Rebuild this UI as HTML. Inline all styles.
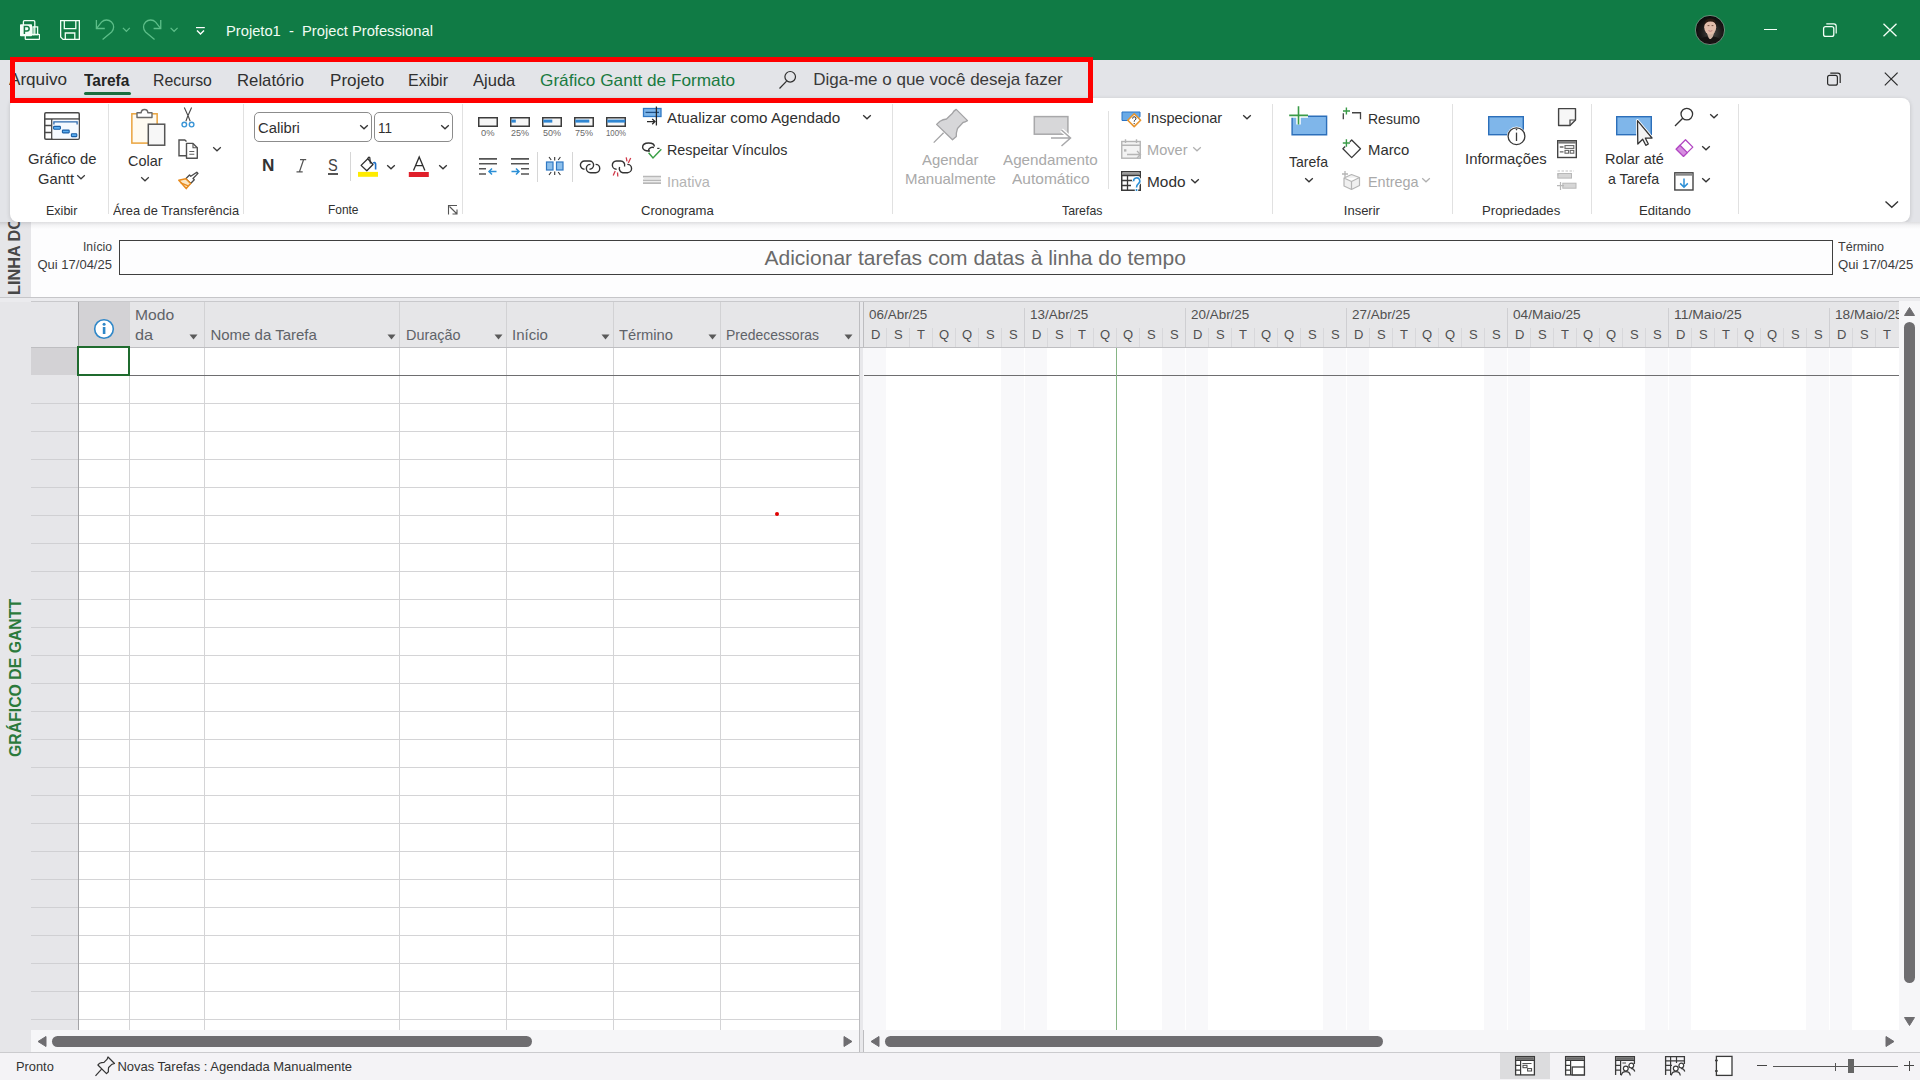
<!DOCTYPE html>
<html><head><meta charset="utf-8"><title>Projeto1 - Project Professional</title>
<style>html,body{margin:0;padding:0}
body{width:1920px;height:1080px;overflow:hidden;position:relative;background:#E3E4E8;font-family:"Liberation Sans",sans-serif}
body>div,body>svg{position:absolute}
.t{position:absolute;white-space:pre;line-height:1;transform-origin:0 0}
</style></head>
<body>
<div style="left:0px;top:0px;width:1920px;height:60px;background:#107B45;"></div>
<div style="left:0px;top:60px;width:1920px;height:38px;background:#E3E4E8;"></div>
<div style="left:10px;top:98px;width:1900px;height:124px;background:#fff;border-radius:8px;box-shadow:0 1px 4px rgba(0,0,0,0.16)"></div>
<div style="left:0px;top:222px;width:31px;height:830px;background:#E6E6E9;"></div>
<div style="left:31px;top:222px;width:1889px;height:75px;background:#FDFDFE;"></div>
<div style="left:0;top:222px;width:1920px;height:7px;background:linear-gradient(rgba(60,60,70,0.16),rgba(60,60,70,0.05) 45%,rgba(60,60,70,0))"></div>
<div style="left:0px;top:297px;width:1920px;height:5px;background:#EBEBEE;"></div>
<div style="left:0px;top:297px;width:1920px;height:1px;background:#C6C6C9;"></div>
<div style="left:31px;top:301px;width:1889px;height:1px;background:#C9C9CC;"></div>
<div style="left:31px;top:302px;width:47px;height:45px;background:#E6E6E9;"></div>
<div style="left:78px;top:302px;width:51px;height:45px;background:#D3D2D5;"></div>
<div style="left:129px;top:302px;width:730px;height:45px;background:#E6E6E8;"></div>
<div style="left:31px;top:347px;width:47px;height:683px;background:#E6E6E9;"></div>
<div style="left:31px;top:347px;width:47px;height:28px;background:#D3D2D5;"></div>
<div style="left:78px;top:347px;width:781px;height:683px;background:#FFFFFF;"></div>
<div style="left:859px;top:302px;width:5px;height:728px;background:#E8E8EB;"></div>
<div style="left:859px;top:302px;width:1px;height:728px;background:#BDBDC0;"></div>
<div style="left:863px;top:302px;width:1px;height:728px;background:#BDBDC0;"></div>
<div style="left:864px;top:302px;width:1035px;height:45px;background:#E6E6E8;"></div>
<div style="left:864px;top:347px;width:1035px;height:683px;background:#FFFFFF;"></div>
<div style="left:1899px;top:301px;width:21px;height:729px;background:#F6F6F8;"></div>
<div style="left:31px;top:1030px;width:828px;height:22px;background:#F6F6F8;"></div>
<div style="left:864px;top:1030px;width:1056px;height:22px;background:#F6F6F8;"></div>
<div style="left:859px;top:1030px;width:5px;height:22px;background:#E8E8EB;"></div>
<div style="left:859px;top:1030px;width:1px;height:22px;background:#BDBDC0;"></div>
<div style="left:863px;top:1030px;width:1px;height:22px;background:#BDBDC0;"></div>
<div style="left:0px;top:1052px;width:1920px;height:28px;background:#F4F3F6;"></div>
<div style="left:0px;top:1052px;width:1920px;height:1px;background:#CBCBCE;"></div>
<div style="left:129px;top:302px;width:1px;height:45px;background:#D2D2D4;"></div>
<div style="left:129px;top:347px;width:1px;height:683px;background:#D4D4D6;"></div>
<div style="left:204px;top:302px;width:1px;height:45px;background:#D2D2D4;"></div>
<div style="left:204px;top:347px;width:1px;height:683px;background:#D4D4D6;"></div>
<div style="left:399px;top:302px;width:1px;height:45px;background:#D2D2D4;"></div>
<div style="left:399px;top:347px;width:1px;height:683px;background:#D4D4D6;"></div>
<div style="left:506px;top:302px;width:1px;height:45px;background:#D2D2D4;"></div>
<div style="left:506px;top:347px;width:1px;height:683px;background:#D4D4D6;"></div>
<div style="left:613px;top:302px;width:1px;height:45px;background:#D2D2D4;"></div>
<div style="left:613px;top:347px;width:1px;height:683px;background:#D4D4D6;"></div>
<div style="left:720px;top:302px;width:1px;height:45px;background:#D2D2D4;"></div>
<div style="left:720px;top:347px;width:1px;height:683px;background:#D4D4D6;"></div>
<div style="left:78px;top:302px;width:1px;height:728px;background:#A3A3A6;"></div>
<div style="left:31px;top:347px;width:868px;height:1px;background:#BEBEC1;"></div>
<div style="left:864px;top:347px;width:1035px;height:1px;background:#BEBEC1;"></div>
<div style="left:78px;top:375px;width:781px;height:1px;background:#6E6E70;"></div>
<div style="left:31px;top:403px;width:47px;height:1px;background:#D0D0D3;"></div>
<div style="left:79px;top:403px;width:780px;height:1px;background:#D4D4D6;"></div>
<div style="left:31px;top:431px;width:47px;height:1px;background:#D0D0D3;"></div>
<div style="left:79px;top:431px;width:780px;height:1px;background:#D4D4D6;"></div>
<div style="left:31px;top:459px;width:47px;height:1px;background:#D0D0D3;"></div>
<div style="left:79px;top:459px;width:780px;height:1px;background:#D4D4D6;"></div>
<div style="left:31px;top:487px;width:47px;height:1px;background:#D0D0D3;"></div>
<div style="left:79px;top:487px;width:780px;height:1px;background:#D4D4D6;"></div>
<div style="left:31px;top:515px;width:47px;height:1px;background:#D0D0D3;"></div>
<div style="left:79px;top:515px;width:780px;height:1px;background:#D4D4D6;"></div>
<div style="left:31px;top:543px;width:47px;height:1px;background:#D0D0D3;"></div>
<div style="left:79px;top:543px;width:780px;height:1px;background:#D4D4D6;"></div>
<div style="left:31px;top:571px;width:47px;height:1px;background:#D0D0D3;"></div>
<div style="left:79px;top:571px;width:780px;height:1px;background:#D4D4D6;"></div>
<div style="left:31px;top:599px;width:47px;height:1px;background:#D0D0D3;"></div>
<div style="left:79px;top:599px;width:780px;height:1px;background:#D4D4D6;"></div>
<div style="left:31px;top:627px;width:47px;height:1px;background:#D0D0D3;"></div>
<div style="left:79px;top:627px;width:780px;height:1px;background:#D4D4D6;"></div>
<div style="left:31px;top:655px;width:47px;height:1px;background:#D0D0D3;"></div>
<div style="left:79px;top:655px;width:780px;height:1px;background:#D4D4D6;"></div>
<div style="left:31px;top:683px;width:47px;height:1px;background:#D0D0D3;"></div>
<div style="left:79px;top:683px;width:780px;height:1px;background:#D4D4D6;"></div>
<div style="left:31px;top:711px;width:47px;height:1px;background:#D0D0D3;"></div>
<div style="left:79px;top:711px;width:780px;height:1px;background:#D4D4D6;"></div>
<div style="left:31px;top:739px;width:47px;height:1px;background:#D0D0D3;"></div>
<div style="left:79px;top:739px;width:780px;height:1px;background:#D4D4D6;"></div>
<div style="left:31px;top:767px;width:47px;height:1px;background:#D0D0D3;"></div>
<div style="left:79px;top:767px;width:780px;height:1px;background:#D4D4D6;"></div>
<div style="left:31px;top:795px;width:47px;height:1px;background:#D0D0D3;"></div>
<div style="left:79px;top:795px;width:780px;height:1px;background:#D4D4D6;"></div>
<div style="left:31px;top:823px;width:47px;height:1px;background:#D0D0D3;"></div>
<div style="left:79px;top:823px;width:780px;height:1px;background:#D4D4D6;"></div>
<div style="left:31px;top:851px;width:47px;height:1px;background:#D0D0D3;"></div>
<div style="left:79px;top:851px;width:780px;height:1px;background:#D4D4D6;"></div>
<div style="left:31px;top:879px;width:47px;height:1px;background:#D0D0D3;"></div>
<div style="left:79px;top:879px;width:780px;height:1px;background:#D4D4D6;"></div>
<div style="left:31px;top:907px;width:47px;height:1px;background:#D0D0D3;"></div>
<div style="left:79px;top:907px;width:780px;height:1px;background:#D4D4D6;"></div>
<div style="left:31px;top:935px;width:47px;height:1px;background:#D0D0D3;"></div>
<div style="left:79px;top:935px;width:780px;height:1px;background:#D4D4D6;"></div>
<div style="left:31px;top:963px;width:47px;height:1px;background:#D0D0D3;"></div>
<div style="left:79px;top:963px;width:780px;height:1px;background:#D4D4D6;"></div>
<div style="left:31px;top:991px;width:47px;height:1px;background:#D0D0D3;"></div>
<div style="left:79px;top:991px;width:780px;height:1px;background:#D4D4D6;"></div>
<div style="left:31px;top:1019px;width:47px;height:1px;background:#D0D0D3;"></div>
<div style="left:79px;top:1019px;width:780px;height:1px;background:#D4D4D6;"></div>
<div style="left:77px;top:346px;width:49px;height:26px;border:2px solid #1F6B2E"></div>
<div style="left:863px;top:348px;width:23px;height:682px;background:#F8F8FA;"></div>
<div style="left:1001px;top:348px;width:23px;height:682px;background:#F8F8FA;"></div>
<div style="left:1024px;top:348px;width:23px;height:682px;background:#F8F8FA;"></div>
<div style="left:1162px;top:348px;width:23px;height:682px;background:#F8F8FA;"></div>
<div style="left:1185px;top:348px;width:23px;height:682px;background:#F8F8FA;"></div>
<div style="left:1323px;top:348px;width:23px;height:682px;background:#F8F8FA;"></div>
<div style="left:1346px;top:348px;width:23px;height:682px;background:#F8F8FA;"></div>
<div style="left:1484px;top:348px;width:23px;height:682px;background:#F8F8FA;"></div>
<div style="left:1507px;top:348px;width:23px;height:682px;background:#F8F8FA;"></div>
<div style="left:1645px;top:348px;width:23px;height:682px;background:#F8F8FA;"></div>
<div style="left:1668px;top:348px;width:23px;height:682px;background:#F8F8FA;"></div>
<div style="left:1806px;top:348px;width:23px;height:682px;background:#F8F8FA;"></div>
<div style="left:1829px;top:348px;width:23px;height:682px;background:#F8F8FA;"></div>
<div style="left:1024px;top:348px;width:1px;height:682px;background:#FFFFFF;"></div>
<div style="left:1185px;top:348px;width:1px;height:682px;background:#FFFFFF;"></div>
<div style="left:1346px;top:348px;width:1px;height:682px;background:#FFFFFF;"></div>
<div style="left:1507px;top:348px;width:1px;height:682px;background:#FFFFFF;"></div>
<div style="left:1668px;top:348px;width:1px;height:682px;background:#FFFFFF;"></div>
<div style="left:1829px;top:348px;width:1px;height:682px;background:#FFFFFF;"></div>
<div style="left:864px;top:375px;width:1035px;height:1px;background:#6E6E70;"></div>
<div style="left:1116px;top:348px;width:1px;height:682px;background:#86B585;"></div>
<div class="t" style="left:225.50px;top:23.25px;font-size:15px;color:#F2FBF4;transform:scaleX(0.9809);">Projeto1  -  Project Professional</div>
<div class="t" style="left:9.00px;top:71.35px;font-size:17px;color:#303030;transform:scaleX(1.0062);">Arquivo</div>
<div class="t" style="left:84.40px;top:71.55px;font-size:17px;color:#242424;font-weight:700;transform:scaleX(0.9103);">Tarefa</div>
<div class="t" style="left:153.40px;top:71.55px;font-size:17px;color:#303030;transform:scaleX(0.9305);">Recurso</div>
<div class="t" style="left:237.40px;top:71.55px;font-size:17px;color:#303030;transform:scaleX(0.9848);">Relatório</div>
<div class="t" style="left:329.50px;top:71.55px;font-size:17px;color:#303030;transform:scaleX(1.0072);">Projeto</div>
<div class="t" style="left:407.50px;top:71.55px;font-size:17px;color:#303030;transform:scaleX(0.9410);">Exibir</div>
<div class="t" style="left:472.70px;top:71.55px;font-size:17px;color:#303030;transform:scaleX(0.9729);">Ajuda</div>
<div class="t" style="left:540.00px;top:71.55px;font-size:17px;color:#1A7A40;transform:scaleX(1.0117);">Gráfico Gantt de Formato</div>
<div class="t" style="left:813.30px;top:70.85px;font-size:17px;color:#3A3A3A;">Diga-me o que você deseja fazer</div>
<div class="t" style="left:27.50px;top:151.00px;font-size:15px;color:#303030;transform:scaleX(0.9899);">Gráfico de</div>
<div class="t" style="left:37.50px;top:170.75px;font-size:15px;color:#303030;transform:scaleX(0.9813);">Gantt</div>
<div class="t" style="left:45.60px;top:203.70px;font-size:13px;color:#303030;transform:scaleX(0.9629);">Exibir</div>
<div class="t" style="left:127.50px;top:152.85px;font-size:15px;color:#303030;transform:scaleX(0.9625);">Colar</div>
<div class="t" style="left:112.50px;top:203.70px;font-size:13px;color:#303030;transform:scaleX(0.9852);">Área de Transferência</div>
<div class="t" style="left:327.50px;top:203.45px;font-size:13px;color:#303030;transform:scaleX(0.9175);">Fonte</div>
<div class="t" style="left:667.40px;top:110.25px;font-size:15px;color:#303030;transform:scaleX(1.0135);">Atualizar como Agendado</div>
<div class="t" style="left:667.40px;top:142.05px;font-size:15px;color:#303030;transform:scaleX(0.9556);">Respeitar Vínculos</div>
<div class="t" style="left:667.40px;top:173.95px;font-size:15px;color:#B4B4B4;transform:scaleX(0.9684);">Inativa</div>
<div class="t" style="left:640.70px;top:203.75px;font-size:13px;color:#303030;transform:scaleX(1.0075);">Cronograma</div>
<div class="t" style="left:922.00px;top:151.85px;font-size:15px;color:#A9A9A9;transform:scaleX(0.9945);">Agendar</div>
<div class="t" style="left:905.00px;top:171.45px;font-size:15px;color:#A9A9A9;">Manualmente</div>
<div class="t" style="left:1003.00px;top:151.85px;font-size:15px;color:#A9A9A9;transform:scaleX(1.0139);">Agendamento</div>
<div class="t" style="left:1012.00px;top:171.45px;font-size:15px;color:#A9A9A9;transform:scaleX(1.0342);">Automático</div>
<div class="t" style="left:1146.50px;top:110.25px;font-size:15px;color:#303030;transform:scaleX(0.9697);">Inspecionar</div>
<div class="t" style="left:1146.50px;top:142.25px;font-size:15px;color:#A9A9A9;transform:scaleX(0.9718);">Mover</div>
<div class="t" style="left:1146.50px;top:174.25px;font-size:15px;color:#303030;transform:scaleX(1.0261);">Modo</div>
<div class="t" style="left:1061.60px;top:203.85px;font-size:13px;color:#303030;transform:scaleX(0.9477);">Tarefas</div>
<div class="t" style="left:1289.00px;top:154.05px;font-size:15px;color:#303030;transform:scaleX(0.9355);">Tarefa</div>
<div class="t" style="left:1367.50px;top:111.05px;font-size:15px;color:#303030;transform:scaleX(0.9328);">Resumo</div>
<div class="t" style="left:1367.50px;top:142.25px;font-size:15px;color:#303030;transform:scaleX(0.9910);">Marco</div>
<div class="t" style="left:1367.50px;top:174.25px;font-size:15px;color:#A9A9A9;transform:scaleX(0.9612);">Entrega</div>
<div class="t" style="left:1343.80px;top:203.95px;font-size:13px;color:#303030;">Inserir</div>
<div class="t" style="left:1465.30px;top:150.65px;font-size:15px;color:#303030;transform:scaleX(0.9899);">Informações</div>
<div class="t" style="left:1482.30px;top:203.95px;font-size:13px;color:#303030;transform:scaleX(1.0113);">Propriedades</div>
<div class="t" style="left:1604.50px;top:150.65px;font-size:15px;color:#303030;transform:scaleX(0.9677);">Rolar até</div>
<div class="t" style="left:1608.00px;top:170.95px;font-size:15px;color:#303030;transform:scaleX(0.9465);">a Tarefa</div>
<div class="t" style="left:1639.00px;top:203.95px;font-size:13px;color:#303030;transform:scaleX(1.0093);">Editando</div>
<div class="t" style="left:83.30px;top:239.75px;font-size:13px;color:#3C3C3C;transform:scaleX(0.9333);">Início</div>
<div class="t" style="left:37.50px;top:257.70px;font-size:13px;color:#3C3C3C;">Qui 17/04/25</div>
<div class="t" style="left:1838.30px;top:239.75px;font-size:13px;color:#3C3C3C;transform:scaleX(0.9648);">Término</div>
<div class="t" style="left:1838.30px;top:257.65px;font-size:13px;color:#3C3C3C;transform:scaleX(1.0101);">Qui 17/04/25</div>
<div class="t" style="left:764.50px;top:247.15px;font-size:21px;color:#6A6A6A;">Adicionar tarefas com datas à linha do tempo</div>
<div class="t" style="left:135.40px;top:307.05px;font-size:15px;color:#5F6368;transform:scaleX(1.0421);">Modo</div>
<div class="t" style="left:135.40px;top:326.85px;font-size:15px;color:#5F6368;transform:scaleX(1.0848);">da</div>
<div class="t" style="left:210.40px;top:326.85px;font-size:15px;color:#5F6368;">Nome da Tarefa</div>
<div class="t" style="left:405.50px;top:326.85px;font-size:15px;color:#5F6368;transform:scaleX(0.9613);">Duração</div>
<div class="t" style="left:512.00px;top:326.85px;font-size:15px;color:#5F6368;">Início</div>
<div class="t" style="left:619.00px;top:326.85px;font-size:15px;color:#5F6368;transform:scaleX(0.9816);">Término</div>
<div class="t" style="left:725.80px;top:326.85px;font-size:15px;color:#5F6368;transform:scaleX(0.9295);">Predecessoras</div>
<div class="t" style="left:15.50px;top:1059.65px;font-size:13px;color:#333333;transform:scaleX(0.9869);">Pronto</div>
<div class="t" style="left:117.40px;top:1060.05px;font-size:13px;color:#333333;">Novas Tarefas : Agendada Manualmente</div>
<div style="left:84px;top:92px;width:47px;height:3px;border-radius:2px;background:#1B6E3E"></div>
<div style="left:108px;top:104px;width:1px;height:110px;background:#E1E1E1;"></div>
<div style="left:243px;top:104px;width:1px;height:110px;background:#E1E1E1;"></div>
<div style="left:462px;top:104px;width:1px;height:110px;background:#E1E1E1;"></div>
<div style="left:892px;top:104px;width:1px;height:110px;background:#E1E1E1;"></div>
<div style="left:1272px;top:104px;width:1px;height:110px;background:#E1E1E1;"></div>
<div style="left:1452px;top:104px;width:1px;height:110px;background:#E1E1E1;"></div>
<div style="left:1591px;top:104px;width:1px;height:110px;background:#E1E1E1;"></div>
<div style="left:1738px;top:104px;width:1px;height:110px;background:#E1E1E1;"></div>
<div style="left:350px;top:152px;width:1px;height:29px;background:#D6D6D6;"></div>
<div style="left:537px;top:152px;width:1px;height:30px;background:#D6D6D6;"></div>
<div style="left:572px;top:152px;width:1px;height:30px;background:#D6D6D6;"></div>
<div style="left:1108px;top:111px;width:1px;height:78px;background:#E1E1E1;"></div>
<div style="left:119px;top:240px;width:1712px;height:33px;border:1px solid #3F3F3F"></div>
<div style="left:0;top:222px;width:31px;height:75px;overflow:hidden"><div class="t" style="left:7.2px;top:72.6px;font-size:16px;font-weight:700;color:#474747;transform:rotate(-90deg) scaleX(1.015);transform-origin:0 0">LINHA DO TEMPO</div></div>
<div class="t" style="left:7.05px;top:757px;font-size:17px;font-weight:700;color:#2B7A3B;transform:rotate(-90deg) scaleX(0.93);transform-origin:0 0">GRÁFICO DE GANTT</div>
<div class="t" style="left:869.00px;top:307.85px;font-size:13px;color:#505050;transform:scaleX(1.0342);">06/Abr/25</div>
<div style="left:1024px;top:308px;width:1px;height:39px;background:#CFCFD2;"></div>
<div class="t" style="left:1030.00px;top:307.85px;font-size:13px;color:#505050;transform:scaleX(1.0342);">13/Abr/25</div>
<div style="left:1185px;top:308px;width:1px;height:39px;background:#CFCFD2;"></div>
<div class="t" style="left:1191.00px;top:307.85px;font-size:13px;color:#505050;transform:scaleX(1.0342);">20/Abr/25</div>
<div style="left:1346px;top:308px;width:1px;height:39px;background:#CFCFD2;"></div>
<div class="t" style="left:1352.00px;top:307.85px;font-size:13px;color:#505050;transform:scaleX(1.0342);">27/Abr/25</div>
<div style="left:1507px;top:308px;width:1px;height:39px;background:#CFCFD2;"></div>
<div class="t" style="left:1513.00px;top:307.85px;font-size:13px;color:#505050;transform:scaleX(1.0525);">04/Maio/25</div>
<div style="left:1668px;top:308px;width:1px;height:39px;background:#CFCFD2;"></div>
<div class="t" style="left:1674.00px;top:307.85px;font-size:13px;color:#505050;transform:scaleX(1.0686);">11/Maio/25</div>
<div style="left:1829px;top:308px;width:1px;height:39px;background:#CFCFD2;"></div>
<div class="t" style="left:1835.00px;top:307.85px;font-size:13px;color:#505050;transform:scaleX(1.0525);">18/Maio/25</div>
<div class="t" style="left:871.00px;top:327.55px;font-size:13px;color:#505050;">D</div>
<div style="left:886px;top:328px;width:1px;height:19px;background:#D8D8DB;"></div>
<div class="t" style="left:894.00px;top:327.55px;font-size:13px;color:#505050;">S</div>
<div style="left:909px;top:328px;width:1px;height:19px;background:#D8D8DB;"></div>
<div class="t" style="left:917.00px;top:327.55px;font-size:13px;color:#505050;">T</div>
<div style="left:932px;top:328px;width:1px;height:19px;background:#D8D8DB;"></div>
<div class="t" style="left:939.00px;top:327.55px;font-size:13px;color:#505050;">Q</div>
<div style="left:955px;top:328px;width:1px;height:19px;background:#D8D8DB;"></div>
<div class="t" style="left:962.00px;top:327.55px;font-size:13px;color:#505050;">Q</div>
<div style="left:978px;top:328px;width:1px;height:19px;background:#D8D8DB;"></div>
<div class="t" style="left:986.00px;top:327.55px;font-size:13px;color:#505050;">S</div>
<div style="left:1001px;top:328px;width:1px;height:19px;background:#D8D8DB;"></div>
<div class="t" style="left:1009.00px;top:327.55px;font-size:13px;color:#505050;">S</div>
<div class="t" style="left:1032.00px;top:327.55px;font-size:13px;color:#505050;">D</div>
<div style="left:1047px;top:328px;width:1px;height:19px;background:#D8D8DB;"></div>
<div class="t" style="left:1055.00px;top:327.55px;font-size:13px;color:#505050;">S</div>
<div style="left:1070px;top:328px;width:1px;height:19px;background:#D8D8DB;"></div>
<div class="t" style="left:1078.00px;top:327.55px;font-size:13px;color:#505050;">T</div>
<div style="left:1093px;top:328px;width:1px;height:19px;background:#D8D8DB;"></div>
<div class="t" style="left:1100.00px;top:327.55px;font-size:13px;color:#505050;">Q</div>
<div style="left:1116px;top:328px;width:1px;height:19px;background:#D8D8DB;"></div>
<div class="t" style="left:1123.00px;top:327.55px;font-size:13px;color:#505050;">Q</div>
<div style="left:1139px;top:328px;width:1px;height:19px;background:#D8D8DB;"></div>
<div class="t" style="left:1147.00px;top:327.55px;font-size:13px;color:#505050;">S</div>
<div style="left:1162px;top:328px;width:1px;height:19px;background:#D8D8DB;"></div>
<div class="t" style="left:1170.00px;top:327.55px;font-size:13px;color:#505050;">S</div>
<div class="t" style="left:1193.00px;top:327.55px;font-size:13px;color:#505050;">D</div>
<div style="left:1208px;top:328px;width:1px;height:19px;background:#D8D8DB;"></div>
<div class="t" style="left:1216.00px;top:327.55px;font-size:13px;color:#505050;">S</div>
<div style="left:1231px;top:328px;width:1px;height:19px;background:#D8D8DB;"></div>
<div class="t" style="left:1239.00px;top:327.55px;font-size:13px;color:#505050;">T</div>
<div style="left:1254px;top:328px;width:1px;height:19px;background:#D8D8DB;"></div>
<div class="t" style="left:1261.00px;top:327.55px;font-size:13px;color:#505050;">Q</div>
<div style="left:1277px;top:328px;width:1px;height:19px;background:#D8D8DB;"></div>
<div class="t" style="left:1284.00px;top:327.55px;font-size:13px;color:#505050;">Q</div>
<div style="left:1300px;top:328px;width:1px;height:19px;background:#D8D8DB;"></div>
<div class="t" style="left:1308.00px;top:327.55px;font-size:13px;color:#505050;">S</div>
<div style="left:1323px;top:328px;width:1px;height:19px;background:#D8D8DB;"></div>
<div class="t" style="left:1331.00px;top:327.55px;font-size:13px;color:#505050;">S</div>
<div class="t" style="left:1354.00px;top:327.55px;font-size:13px;color:#505050;">D</div>
<div style="left:1369px;top:328px;width:1px;height:19px;background:#D8D8DB;"></div>
<div class="t" style="left:1377.00px;top:327.55px;font-size:13px;color:#505050;">S</div>
<div style="left:1392px;top:328px;width:1px;height:19px;background:#D8D8DB;"></div>
<div class="t" style="left:1400.00px;top:327.55px;font-size:13px;color:#505050;">T</div>
<div style="left:1415px;top:328px;width:1px;height:19px;background:#D8D8DB;"></div>
<div class="t" style="left:1422.00px;top:327.55px;font-size:13px;color:#505050;">Q</div>
<div style="left:1438px;top:328px;width:1px;height:19px;background:#D8D8DB;"></div>
<div class="t" style="left:1445.00px;top:327.55px;font-size:13px;color:#505050;">Q</div>
<div style="left:1461px;top:328px;width:1px;height:19px;background:#D8D8DB;"></div>
<div class="t" style="left:1469.00px;top:327.55px;font-size:13px;color:#505050;">S</div>
<div style="left:1484px;top:328px;width:1px;height:19px;background:#D8D8DB;"></div>
<div class="t" style="left:1492.00px;top:327.55px;font-size:13px;color:#505050;">S</div>
<div class="t" style="left:1515.00px;top:327.55px;font-size:13px;color:#505050;">D</div>
<div style="left:1530px;top:328px;width:1px;height:19px;background:#D8D8DB;"></div>
<div class="t" style="left:1538.00px;top:327.55px;font-size:13px;color:#505050;">S</div>
<div style="left:1553px;top:328px;width:1px;height:19px;background:#D8D8DB;"></div>
<div class="t" style="left:1561.00px;top:327.55px;font-size:13px;color:#505050;">T</div>
<div style="left:1576px;top:328px;width:1px;height:19px;background:#D8D8DB;"></div>
<div class="t" style="left:1583.00px;top:327.55px;font-size:13px;color:#505050;">Q</div>
<div style="left:1599px;top:328px;width:1px;height:19px;background:#D8D8DB;"></div>
<div class="t" style="left:1606.00px;top:327.55px;font-size:13px;color:#505050;">Q</div>
<div style="left:1622px;top:328px;width:1px;height:19px;background:#D8D8DB;"></div>
<div class="t" style="left:1630.00px;top:327.55px;font-size:13px;color:#505050;">S</div>
<div style="left:1645px;top:328px;width:1px;height:19px;background:#D8D8DB;"></div>
<div class="t" style="left:1653.00px;top:327.55px;font-size:13px;color:#505050;">S</div>
<div class="t" style="left:1676.00px;top:327.55px;font-size:13px;color:#505050;">D</div>
<div style="left:1691px;top:328px;width:1px;height:19px;background:#D8D8DB;"></div>
<div class="t" style="left:1699.00px;top:327.55px;font-size:13px;color:#505050;">S</div>
<div style="left:1714px;top:328px;width:1px;height:19px;background:#D8D8DB;"></div>
<div class="t" style="left:1722.00px;top:327.55px;font-size:13px;color:#505050;">T</div>
<div style="left:1737px;top:328px;width:1px;height:19px;background:#D8D8DB;"></div>
<div class="t" style="left:1744.00px;top:327.55px;font-size:13px;color:#505050;">Q</div>
<div style="left:1760px;top:328px;width:1px;height:19px;background:#D8D8DB;"></div>
<div class="t" style="left:1767.00px;top:327.55px;font-size:13px;color:#505050;">Q</div>
<div style="left:1783px;top:328px;width:1px;height:19px;background:#D8D8DB;"></div>
<div class="t" style="left:1791.00px;top:327.55px;font-size:13px;color:#505050;">S</div>
<div style="left:1806px;top:328px;width:1px;height:19px;background:#D8D8DB;"></div>
<div class="t" style="left:1814.00px;top:327.55px;font-size:13px;color:#505050;">S</div>
<div class="t" style="left:1837.00px;top:327.55px;font-size:13px;color:#505050;">D</div>
<div style="left:1852px;top:328px;width:1px;height:19px;background:#D8D8DB;"></div>
<div class="t" style="left:1860.00px;top:327.55px;font-size:13px;color:#505050;">S</div>
<div style="left:1875px;top:328px;width:1px;height:19px;background:#D8D8DB;"></div>
<div class="t" style="left:1883.00px;top:327.55px;font-size:13px;color:#505050;">T</div>
<svg style="left:189px;top:334px;" width="9" height="6" viewBox="0 0 9 6"><path d="M0.5 0.5 L8.5 0.5 L4.5 5.5 Z" fill="#5A5A5A"/></svg>
<svg style="left:387px;top:334px;" width="9" height="6" viewBox="0 0 9 6"><path d="M0.5 0.5 L8.5 0.5 L4.5 5.5 Z" fill="#5A5A5A"/></svg>
<svg style="left:494px;top:334px;" width="9" height="6" viewBox="0 0 9 6"><path d="M0.5 0.5 L8.5 0.5 L4.5 5.5 Z" fill="#5A5A5A"/></svg>
<svg style="left:601px;top:334px;" width="9" height="6" viewBox="0 0 9 6"><path d="M0.5 0.5 L8.5 0.5 L4.5 5.5 Z" fill="#5A5A5A"/></svg>
<svg style="left:708px;top:334px;" width="9" height="6" viewBox="0 0 9 6"><path d="M0.5 0.5 L8.5 0.5 L4.5 5.5 Z" fill="#5A5A5A"/></svg>
<svg style="left:844px;top:334px;" width="9" height="6" viewBox="0 0 9 6"><path d="M0.5 0.5 L8.5 0.5 L4.5 5.5 Z" fill="#5A5A5A"/></svg>
<svg style="left:93px;top:318px;" width="22" height="22" viewBox="0 0 22 22"><circle cx="11" cy="11" r="9.3" fill="#fff" stroke="#2F87C8" stroke-width="1.6"/><rect x="9.8" y="9" width="2.6" height="7" fill="#2F87C8"/><circle cx="11.1" cy="6.3" r="1.5" fill="#2F87C8"/></svg>
<div style="left:1899px;top:301px;width:21px;height:729px;background:#F6F6F8;"></div>
<svg style="left:37px;top:1036px;" width="10" height="11" viewBox="0 0 10 11"><path d="M9 0.5 L9 10.5 L1 5.5 Z" fill="#6E6D70" stroke="#6E6D70" stroke-linejoin="round" stroke-width="1"/></svg>
<div style="left:52px;top:1036px;width:480px;height:11px;border-radius:6px;background:#6E6D70"></div>
<svg style="left:843px;top:1036px;" width="10" height="11" viewBox="0 0 10 11"><path d="M1 0.5 L1 10.5 L9 5.5 Z" fill="#6E6D70" stroke="#6E6D70" stroke-linejoin="round" stroke-width="1"/></svg>
<svg style="left:870px;top:1036px;" width="10" height="11" viewBox="0 0 10 11"><path d="M9 0.5 L9 10.5 L1 5.5 Z" fill="#6E6D70" stroke="#6E6D70" stroke-linejoin="round" stroke-width="1"/></svg>
<div style="left:885px;top:1036px;width:498px;height:11px;border-radius:6px;background:#6E6D70"></div>
<svg style="left:1885px;top:1036px;" width="10" height="11" viewBox="0 0 10 11"><path d="M1 0.5 L1 10.5 L9 5.5 Z" fill="#6E6D70" stroke="#6E6D70" stroke-linejoin="round" stroke-width="1"/></svg>
<svg style="left:1904px;top:307px;" width="11" height="9" viewBox="0 0 11 9"><path d="M0.5 8.5 L10.5 8.5 L5.5 0.5 Z" fill="#6E6D70" stroke="#6E6D70" stroke-linejoin="round" stroke-width="1"/></svg>
<div style="left:1904px;top:322px;width:11px;height:661px;border-radius:6px;background:#6E6D70"></div>
<svg style="left:1904px;top:1017px;" width="11" height="9" viewBox="0 0 11 9"><path d="M0.5 0.5 L10.5 0.5 L5.5 8.5 Z" fill="#6E6D70" stroke="#6E6D70" stroke-linejoin="round" stroke-width="1"/></svg>
<div style="left:1500px;top:1053px;width:50px;height:26px;background:#DCDCDE;"></div>
<div style="left:1757px;top:1065px;width:10px;height:1px;background:#444;"></div>
<div style="left:1773px;top:1066px;width:125px;height:1px;background:#555;"></div>
<div style="left:1835px;top:1063px;width:1px;height:8px;background:#555;"></div>
<div style="left:1848px;top:1059px;width:6px;height:14px;background:#666;"></div>
<div style="left:1904px;top:1065px;width:10px;height:1px;background:#444;"></div>
<div style="left:1908.5px;top:1061px;width:1px;height:10px;background:#444;"></div>
<div style="left:775px;top:512px;width:4px;height:4px;border-radius:2px;background:#E00000"></div>
<svg style="left:20px;top:20px;" width="20" height="20" viewBox="0 0 20 20"><rect x="3.4" y="0.7" width="11.4" height="14" rx="1" fill="none" stroke="#F2FFF6" stroke-width="1.3"/><rect x="5.3" y="14.4" width="14.2" height="5" rx="0.6" fill="none" stroke="#F2FFF6" stroke-width="1.3"/><rect x="13" y="6.9" width="4.6" height="7.8" fill="none" stroke="#F2FFF6" stroke-width="1.3"/><rect x="0" y="4.2" width="12" height="12" rx="0.8" fill="#F4FFF8"/><path d="M4.4 14 V6.6 H7 a2.15 2.15 0 0 1 0 4.3 H4.4" fill="none" stroke="#147C45" stroke-width="1.5"/></svg>
<svg style="left:60px;top:20px;" width="20" height="20" viewBox="0 0 20 20"><path d="M0.65 0.65 H19.35 V19.35 H3 L0.65 17 Z" fill="none" stroke="#F2FFF6" stroke-width="1.3"/><path d="M4.3 0.65 V8.6 H15.8 V0.65" fill="none" stroke="#F2FFF6" stroke-width="1.3"/><path d="M5.3 19.35 V13 H14.8 V19.35" fill="none" stroke="#F2FFF6" stroke-width="1.3"/></svg>
<svg style="left:92px;top:16px;" width="30" height="28" viewBox="0 0 30 28"><path d="M4.4 4 V12.5 H12.8" fill="none" stroke="#5DBE89" stroke-width="1.3"/><path d="M4.6 12.3 L9.5 6.1 A7 7 0 0 1 19.6 16 L10.6 23.4" fill="none" stroke="#5DBE89" stroke-width="1.3"/></svg>
<svg style="left:92px;top:16px;" width="30" height="28" viewBox="0 0 30 28"></svg>
<svg style="left:120px;top:24px;" width="12" height="10" viewBox="0 0 12 10"><path d="M2.9 3.9 L6.4 7.3 L9.8 3.9" fill="none" stroke="#5DBE89" stroke-width="1.2"/></svg>
<svg style="left:140px;top:16px;" width="30" height="28" viewBox="0 0 30 28"><path d="M20.75 4 V12.5 H13.6" fill="none" stroke="#5DBE89" stroke-width="1.3"/><path d="M20.55 12.3 L15.65 6.1 A7 7 0 0 0 5.55 16 L14.55 23.4" fill="none" stroke="#5DBE89" stroke-width="1.3"/></svg>
<svg style="left:168px;top:24px;" width="12" height="10" viewBox="0 0 12 10"><path d="M2.6 3.9 L6.1 7.3 L9.6 3.9" fill="none" stroke="#5DBE89" stroke-width="1.2"/></svg>
<svg style="left:194px;top:24px;" width="14" height="14" viewBox="0 0 14 14"><path d="M2 3.6 H10.8" stroke="#fff" stroke-width="1.2"/><path d="M3 6.6 L6.5 10 L10 6.6" fill="none" stroke="#fff" stroke-width="1.4"/></svg>
<svg style="left:1695px;top:15px;" width="30" height="30" viewBox="0 0 30 30"><defs><radialGradient id="av" cx="55%" cy="60%" r="60%"><stop offset="0" stop-color="#4a4846"/><stop offset="0.6" stop-color="#1c1a19"/><stop offset="1" stop-color="#0a0909"/></radialGradient><clipPath id="avc"><circle cx="15" cy="15" r="14.6"/></clipPath></defs><circle cx="15" cy="15" r="14.6" fill="url(#av)"/><g clip-path="url(#avc)"><path d="M11.5 17 L19.5 17 L17 24 L14 24 Z" fill="#cdb0a0"/><ellipse cx="15.2" cy="12.3" rx="6" ry="7.2" fill="#e2bcaa"/><path d="M9.3 11 Q9 3.5 15.5 3.4 Q21.6 3.6 21.4 11 Q20.8 6.8 15.5 6.6 Q10.2 6.8 9.3 11 Z" fill="#2a1a12"/><path d="M12.6 10.6 h1.8 M16.6 10.6 h1.8" stroke="#6a4a3a" stroke-width="0.9"/><path d="M13.5 15.6 Q15.3 17 17.3 15.6" stroke="#b87a7a" stroke-width="0.9" fill="none"/><path d="M2 31 Q3 22.5 12 21.5 L15.2 24.5 L18.5 21.5 Q27 22.5 28 31 Z" fill="#161312"/></g><circle cx="15" cy="15" r="14.6" fill="none" stroke="#e8f5ec" stroke-width="0.7" stroke-opacity="0.6"/></svg>
<div style="left:1764px;top:29px;width:13px;height:1.2px;background:#F4FFF7;"></div>
<svg style="left:1820px;top:20px;" width="20" height="20" viewBox="0 0 20 20"><rect x="3.6" y="6.6" width="10.2" height="9.8" rx="2" fill="none" stroke="#F4FFF7" stroke-width="1.3"/><path d="M6.3 3.9 H13.8 a2.4 2.4 0 0 1 2.4 2.4 V13.6" fill="none" stroke="#F4FFF7" stroke-width="1.2"/></svg>
<svg style="left:1880px;top:20px;" width="20" height="20" viewBox="0 0 20 20"><path d="M3.5 3.8 L16.5 16.3 M16.5 3.8 L3.5 16.3" stroke="#F4FFF7" stroke-width="1.3"/></svg>
<svg style="left:776px;top:68px;" width="24" height="24" viewBox="0 0 24 24"><circle cx="14.2" cy="8.8" r="5.3" fill="none" stroke="#2E2E2E" stroke-width="1.2"/><path d="M10.6 13.2 L3.5 20.5" stroke="#2E2E2E" stroke-width="1.2"/></svg>
<svg style="left:1824px;top:69px;" width="20" height="20" viewBox="0 0 20 20"><rect x="3.6" y="6.4" width="9.8" height="9.8" rx="2" fill="none" stroke="#2B2B2B" stroke-width="1.2"/><path d="M6.3 4.2 H13.8 a2.4 2.4 0 0 1 2.4 2.4 V14" fill="none" stroke="#2B2B2B" stroke-width="1.2"/></svg>
<svg style="left:1881px;top:69px;" width="20" height="20" viewBox="0 0 20 20"><path d="M3.8 3.6 L16.6 16.4 M16.6 3.6 L3.8 16.4" stroke="#2B2B2B" stroke-width="1.2"/></svg>
<svg style="left:43px;top:111px;" width="38" height="30" viewBox="0 0 38 30"><rect x="1.75" y="1.75" width="34.5" height="26.5" rx="1.2" fill="#fff" stroke="#4A4A4A" stroke-width="1.5"/><path d="M1.75 8 H36.25 M8.8 8 V28.25 M1.75 14.6 H8.8 M1.75 21.4 H8.8" stroke="#4A4A4A" stroke-width="1.5"/><rect x="9.6" y="8.8" width="25.9" height="18.7" fill="#F5FAFF"/><path d="M10.9 13.6 V10.8 H34.1 V13.6" fill="none" stroke="#2D6AAE" stroke-width="1.3"/><rect x="10.6" y="15.4" width="6.8" height="2.8" rx="0.6" fill="#5AAEF0" stroke="#1A5FA6" stroke-width="1.1"/><rect x="19.4" y="19.1" width="6.8" height="2.8" rx="0.6" fill="#5AAEF0" stroke="#1A5FA6" stroke-width="1.1"/><rect x="28.4" y="22.8" width="5.4" height="2.8" rx="0.6" fill="#5AAEF0" stroke="#1A5FA6" stroke-width="1.1"/></svg>
<svg style="left:76px;top:174px;" width="10" height="6" viewBox="0 0 10 6"><path d="M1.2 1.2 L5 4.8 L8.8 1.2" fill="none" stroke="#3A3A3A" stroke-width="1.2"/></svg>
<svg style="left:128px;top:106px;" width="40" height="42" viewBox="0 0 40 42"><rect x="3.85" y="7.8" width="25.3" height="29.3" fill="#FFFBF1" stroke="#EAA43E" stroke-width="1.5"/><path d="M9 11.5 V6.8 H13.2 A3.3 3.3 0 0 1 19.8 6.8 H24 V11.5 Z" fill="#fff" stroke="#6A6A6A" stroke-width="1.4" stroke-linejoin="round"/><rect x="20.3" y="18.2" width="16.4" height="21" fill="#F7F7F7" stroke="#555" stroke-width="1.5"/></svg>
<svg style="left:139.5px;top:176px;" width="10" height="6" viewBox="0 0 10 6"><path d="M1.2 1.2 L5 4.8 L8.8 1.2" fill="none" stroke="#3A3A3A" stroke-width="1.2"/></svg>
<svg style="left:178px;top:105px;" width="18" height="24" viewBox="0 0 18 24"><path d="M6.3 2.5 L10.6 12 L12.2 16.3 M13.6 2.5 L9.4 12 L7.9 16.3" fill="none" stroke="#4A4A4A" stroke-width="1.1"/><circle cx="6.3" cy="19.6" r="2.3" fill="#fff" stroke="#3B95D6" stroke-width="1.4"/><circle cx="13.6" cy="19.6" r="2.3" fill="#fff" stroke="#3B95D6" stroke-width="1.4"/></svg>
<svg style="left:176px;top:137px;" width="24" height="24" viewBox="0 0 24 24"><path d="M10 18.8 H3 V3 H8.8 L10.5 4.5" fill="none" stroke="#505050" stroke-width="1.4"/><path d="M10.5 21.3 V6.4 H17 L21.3 10.7 V21.3 Z" fill="#fff" stroke="#505050" stroke-width="1.4" stroke-linejoin="round"/><path d="M17 6.4 V10.7 H21.3" fill="none" stroke="#505050" stroke-width="1.1"/><path d="M13.3 14.5 H18.3 M13.3 17.3 H18.3" stroke="#606060" stroke-width="1.1"/></svg>
<svg style="left:212px;top:146px;" width="10" height="6" viewBox="0 0 10 6"><path d="M1.2 1.2 L5 4.8 L8.8 1.2" fill="none" stroke="#3A3A3A" stroke-width="1.2"/></svg>
<svg style="left:176px;top:169px;" width="24" height="24" viewBox="0 0 24 24"><path d="M20.8 3.2 L22 4.4 L17 9.5 L18.3 10.8 L14.6 14.5 L9.8 9.7 L13.5 6 L14.8 7.3 Z" fill="#fff" stroke="#4A4A4A" stroke-width="1.3" stroke-linejoin="round"/><path d="M9.8 9.7 L2.8 11.3 L10.2 19.6 L14.6 14.5 Z" fill="#FCE7C4" stroke="#E88B1E" stroke-width="1.5" stroke-linejoin="round"/><path d="M4.8 13.8 L12.2 16.8" stroke="#E88B1E" stroke-width="1.3"/></svg>
<div style="left:254px;top:112px;width:116px;height:28px;border:1px solid #8C8C8C;border-radius:5px;background:#fff"></div>
<div style="left:374px;top:112px;width:77px;height:28px;border:1px solid #8C8C8C;border-radius:5px;background:#fff"></div>
<svg style="left:359px;top:124px;" width="10" height="6" viewBox="0 0 10 6"><path d="M1.2 1.2 L5 4.8 L8.8 1.2" fill="none" stroke="#333" stroke-width="1.3"/></svg>
<div class="t" style="left:257.50px;top:120.85px;font-size:14px;color:#303030;transform:scaleX(1.0561);">Calibri</div>
<div class="t" style="left:378.00px;top:120.85px;font-size:14px;color:#303030;transform:scaleX(0.9633);">11</div>
<svg style="left:440px;top:124px;" width="10" height="6" viewBox="0 0 10 6"><path d="M1.2 1.2 L5 4.8 L8.8 1.2" fill="none" stroke="#333" stroke-width="1.3"/></svg>
<div class="t" style="left:262.00px;top:157.45px;font-size:17px;color:#333333;font-weight:700;transform:scaleX(1.0100);">N</div>
<svg style="left:294px;top:157px;" width="14" height="18" viewBox="0 0 14 18"><path d="M6 2.6 H12.2 M2.5 14.9 H8.7 M9.6 2.6 L5.4 14.9" fill="none" stroke="#555" stroke-width="1.3"/></svg>
<div class="t" style="left:328.30px;top:158.00px;font-size:16px;color:#444444;transform:scaleX(0.9089);">S</div>
<div style="left:328px;top:173px;width:10px;height:1.5px;background:#555;"></div>
<svg style="left:356px;top:154px;" width="24" height="26" viewBox="0 0 24 26"><path d="M5.1 11.4 L11.8 4.7 L17 10.5 L10.8 16.8 Z" fill="#fff" stroke="#2E2E2E" stroke-width="1.3" stroke-linejoin="round"/><path d="M11.7 4.8 L12.3 3.6 Q13 2.6 13.8 3.6 L14.4 9.6" fill="none" stroke="#2E2E2E" stroke-width="1.2"/><path d="M17.2 9.2 Q18.9 7.8 19.6 9.8 V15.6" fill="none" stroke="#1F6FC5" stroke-width="1.6"/><rect x="2" y="17.9" width="20" height="4.9" fill="#FFEB00"/></svg>
<svg style="left:386px;top:164px;" width="10" height="6" viewBox="0 0 10 6"><path d="M1.2 1.2 L5 4.8 L8.8 1.2" fill="none" stroke="#333" stroke-width="1.3"/></svg>
<svg style="left:406px;top:154px;" width="26" height="26" viewBox="0 0 26 26"><path d="M7.5 16.6 L13.2 3 L18.9 16.6 M9.5 11.6 H16.9" fill="none" stroke="#2E2E2E" stroke-width="1.3"/><rect x="2.8" y="18" width="20" height="5" fill="#E0202B"/></svg>
<svg style="left:437.5px;top:164px;" width="10" height="6" viewBox="0 0 10 6"><path d="M1.2 1.2 L5 4.8 L8.8 1.2" fill="none" stroke="#333" stroke-width="1.3"/></svg>
<svg style="left:446px;top:204px;" width="14" height="12" viewBox="0 0 14 12"><path d="M2.5 10.5 V1.5 H11 M3.5 2.5 L10.5 9.5 M6.5 10 H11 V5.5" fill="none" stroke="#555" stroke-width="1.1"/></svg>
<svg style="left:477px;top:116px;" width="22" height="12" viewBox="0 0 22 12"><rect x="1.75" y="1.75" width="18.5" height="8.5" fill="#F6F6F6" stroke="#3C3C3C" stroke-width="1.5"/></svg>
<div class="t" style="left:481.25px;top:128.55px;font-size:9px;color:#6A6A6A;transform:scaleX(1.0378);">0%</div>
<svg style="left:509px;top:116px;" width="22" height="12" viewBox="0 0 22 12"><rect x="1.75" y="1.75" width="18.5" height="8.5" fill="#F6F6F6" stroke="#3C3C3C" stroke-width="1.5"/><rect x="2.3" y="3.6" width="4.5" height="3" fill="#2F86D2"/></svg>
<div class="t" style="left:511.00px;top:128.55px;font-size:9px;color:#6A6A6A;">25%</div>
<svg style="left:541px;top:116px;" width="22" height="12" viewBox="0 0 22 12"><rect x="1.75" y="1.75" width="18.5" height="8.5" fill="#F6F6F6" stroke="#3C3C3C" stroke-width="1.5"/><rect x="2.3" y="3.6" width="9" height="3" fill="#2F86D2"/></svg>
<div class="t" style="left:543.00px;top:128.55px;font-size:9px;color:#6A6A6A;">50%</div>
<svg style="left:573px;top:116px;" width="22" height="12" viewBox="0 0 22 12"><rect x="1.75" y="1.75" width="18.5" height="8.5" fill="#F6F6F6" stroke="#3C3C3C" stroke-width="1.5"/><rect x="2.3" y="3.6" width="14" height="3" fill="#2F86D2"/></svg>
<div class="t" style="left:575.00px;top:128.55px;font-size:9px;color:#6A6A6A;">75%</div>
<svg style="left:605px;top:116px;" width="22" height="12" viewBox="0 0 22 12"><rect x="1.75" y="1.75" width="18.5" height="8.5" fill="#F6F6F6" stroke="#3C3C3C" stroke-width="1.5"/><rect x="2.3" y="3.6" width="18" height="3" fill="#2F86D2"/></svg>
<div class="t" style="left:606.00px;top:128.55px;font-size:9px;color:#6A6A6A;transform:scaleX(0.8689);">100%</div>
<svg style="left:477px;top:156px;" width="22" height="20" viewBox="0 0 22 20"><path d="M2 2.9 H20 M2 7.75 H20 M2 12.75 H9 M2 18 H9" stroke="#555" stroke-width="1.6"/><path d="M19.5 15.5 H12.2 M15 12.5 L12 15.5 L15 18.5" fill="none" stroke="#2B8FD6" stroke-width="1.5"/></svg>
<svg style="left:509px;top:156px;" width="22" height="20" viewBox="0 0 22 20"><path d="M2 2.9 H20 M2 7.75 H20 M12 12.75 H20 M12 18 H20" stroke="#555" stroke-width="1.6"/><path d="M2.5 15.5 H9.8 M7 12.5 L10 15.5 L7 18.5" fill="none" stroke="#2B8FD6" stroke-width="1.5"/></svg>
<svg style="left:544px;top:155px;" width="22" height="22" viewBox="0 0 22 22"><rect x="2.5" y="7" width="6.5" height="8" fill="#8EC0EC" stroke="#2F78C4" stroke-width="1.2"/><rect x="12.5" y="7" width="6.5" height="8" fill="#8EC0EC" stroke="#2F78C4" stroke-width="1.2"/><path d="M10.7 2 V5.5 M10.7 16.5 V20 M5 2 L7.2 5 M16.4 2 L14.2 5 M5 20 L7.2 17 M16.4 20 L14.2 17" stroke="#333" stroke-width="1.1"/></svg>
<svg style="left:578px;top:158px;" width="24" height="17" viewBox="0 0 24 17"><path d="M6.5 11.2 A4.1 4.1 0 0 1 6.5 3 H11.5 A4.1 4.1 0 0 1 11.5 11.2" fill="none" stroke="#333" stroke-width="1.4"/><path d="M12.5 6.4 A4.15 4.15 0 0 0 12.5 14.7 H17.6 A4.15 4.15 0 0 0 17.6 6.4" fill="none" stroke="#333" stroke-width="1.4"/></svg>
<svg style="left:610px;top:155px;" width="24" height="24" viewBox="0 0 24 24"><path d="M6.6 14.2 A4.1 4.1 0 0 1 6.3 6 H10.6 A4.1 4.1 0 0 1 14.5 11.5" fill="none" stroke="#333" stroke-width="1.4"/><path d="M9.6 12 A4.15 4.15 0 0 0 12.85 17.7 H17.55 A4.15 4.15 0 0 0 17.3 9.4" fill="none" stroke="#333" stroke-width="1.4"/><path d="M16.2 2.4 L17 6.3 M20.7 3 L18.3 8 M5.2 16 L3.2 20.4 M7.5 17.5 L7.8 21.5" stroke="#D03A4A" stroke-width="1.3"/></svg>
<svg style="left:640px;top:104px;" width="24" height="24" viewBox="0 0 24 24"><rect x="3.5" y="4.5" width="17.5" height="8" fill="#7DB6EA" stroke="#2F78C4" stroke-width="1.3"/><path d="M5.5 8.4 H19" stroke="#1E4F86" stroke-width="1.3"/><path d="M16.4 2.5 V21.5" stroke="#2A2A2A" stroke-width="1.3"/><path d="M7 17.6 H15 M12.2 15 L15 17.6 L12.2 20.2" fill="none" stroke="#2A2A2A" stroke-width="1.3"/></svg>
<svg style="left:862px;top:114px;" width="10" height="6" viewBox="0 0 10 6"><path d="M1.2 1.2 L5 4.8 L8.8 1.2" fill="none" stroke="#333" stroke-width="1.3"/></svg>
<svg style="left:640px;top:138px;" width="24" height="24" viewBox="0 0 24 24"><path d="M9.6 13 C5.3 13.2 2.6 11.8 2.6 9.2 C2.6 6.6 5.2 5 8.6 5 C12 5 14.4 6.4 14.4 8.6" fill="none" stroke="#333" stroke-width="1.4"/><path d="M14 9.5 C12.5 9 10.5 9.3 9.2 10.7 C8.3 11.7 8.6 12.7 9.6 13.3" fill="none" stroke="#333" stroke-width="1.4"/><path d="M17.2 10.4 H19.5" stroke="#333" stroke-width="1.2"/><path d="M8.6 14.8 L13 20 L21.3 11.3" fill="none" stroke="#3BA047" stroke-width="1.5"/></svg>
<svg style="left:640px;top:174px;" width="24" height="14" viewBox="0 0 24 14"><path d="M3 2.6 H21 M3 6.4 H21 M3 9.2 H21" stroke="#B8B8B8" stroke-width="1.8"/><path d="M3.5 4.5 H20.5" stroke="#E6E6E6" stroke-width="1.5"/></svg>
<svg style="left:930px;top:106px;" width="40" height="40" viewBox="0 0 40 40"><path d="M26.2 3.4 L37.5 14.6 Q35 16 33 16.5 L27.5 22.5 Q26 27 26.3 30.5 L22.5 33.8 L6.6 18.4 L10 15.2 Q13 13.5 16.5 13 L22.5 7.2 Q23.5 5 26.2 3.4 Z" fill="#D7D7D9" stroke="#A3A3A5" stroke-width="1.3" stroke-linejoin="round"/><path d="M13.6 26.8 L3.7 36.6" stroke="#A3A3A5" stroke-width="1.3"/></svg>
<svg style="left:1030px;top:112px;" width="44" height="38" viewBox="0 0 44 38"><rect x="4.3" y="4.6" width="33.6" height="17.6" fill="#D7D7D9" stroke="#A8A8AA" stroke-width="1.5"/><path d="M21 26 H40.5 M31.5 18 L40.5 26 L31.5 34" fill="none" stroke="#FFFFFF" stroke-width="4"/><path d="M21 26 H40.5 M31.5 18 L40.5 26 L31.5 34" fill="none" stroke="#A8A8AA" stroke-width="1.5"/></svg>
<svg style="left:1120px;top:108px;" width="24" height="22" viewBox="0 0 24 22"><path d="M2 4 H20 V8.5 L16 12.5 H2 Z" fill="#6AAAE6" stroke="#2A74C6" stroke-width="1"/><path d="M14.2 5.8 L20.6 12.2 L14.2 18.6 L7.8 12.2 Z" fill="#fff" stroke="#E8952E" stroke-width="1.6" stroke-linejoin="round"/><path d="M12.6 10.6 A1.7 1.7 0 1 1 15 12 Q14.2 12.5 14.2 13.7" fill="none" stroke="#333" stroke-width="1"/><circle cx="14.2" cy="15.6" r="0.7" fill="#333"/></svg>
<svg style="left:1242px;top:114px;" width="10" height="6" viewBox="0 0 10 6"><path d="M1.2 1.2 L5 4.8 L8.8 1.2" fill="none" stroke="#333" stroke-width="1.3"/></svg>
<svg style="left:1120px;top:137px;" width="24" height="24" viewBox="0 0 24 24"><rect x="1.75" y="4.5" width="18.5" height="16.7" fill="#F3F3F3" stroke="#B5B5B5" stroke-width="1.4"/><path d="M1.75 8.2 H20.25 M5.5 2.2 V6 M16.5 2.2 V6" stroke="#B5B5B5" stroke-width="1.4"/><rect x="4" y="12.2" width="2.4" height="2.4" fill="#B5B5B5"/><path d="M7 17.5 H20.5 M17 14 L20.5 17.5 L17 21" fill="none" stroke="#B5B5B5" stroke-width="1.3"/></svg>
<svg style="left:1192px;top:146px;" width="10" height="6" viewBox="0 0 10 6"><path d="M1.2 1.2 L5 4.8 L8.8 1.2" fill="none" stroke="#B0B0B0" stroke-width="1.2"/></svg>
<svg style="left:1120px;top:170px;" width="24" height="24" viewBox="0 0 24 24"><rect x="1.75" y="1.75" width="18.5" height="18.5" fill="#fff" stroke="#3A3A3A" stroke-width="1.5"/><rect x="2.5" y="2.5" width="17" height="2.5" fill="#9A9A9A"/><path d="M1.75 5.5 H20.25 M1.75 10.5 H13 M1.75 15.5 H11 M7.5 5.5 V20.25" stroke="#3A3A3A" stroke-width="1.3"/><path d="M13.6 11.2 A3.1 3.1 0 1 1 18.4 13.6 Q16.5 15 16.5 17.5 M16.5 19 V21" fill="none" stroke="#fff" stroke-width="3.4"/><path d="M13.6 11.2 A3.1 3.1 0 1 1 18.4 13.6 Q16.5 15 16.5 17.5 M16.5 19 V21" fill="none" stroke="#2B8FD6" stroke-width="1.6"/></svg>
<svg style="left:1190px;top:178px;" width="10" height="6" viewBox="0 0 10 6"><path d="M1.2 1.2 L5 4.8 L8.8 1.2" fill="none" stroke="#333" stroke-width="1.3"/></svg>
<svg style="left:1286px;top:104px;" width="44" height="34" viewBox="0 0 44 34"><path d="M6.1 12.3 H40.6 V30.7 H6.1 Z" fill="#7FB6EA" stroke="#2C6FBA" stroke-width="1.4"/><path d="M3.2 11.4 H22 M12.5 2.2 V20.6" fill="none" stroke="#fff" stroke-width="4.5"/><path d="M3.2 11.4 H22 M12.5 2.2 V20.6" fill="none" stroke="#3A9B48" stroke-width="1.6"/></svg>
<svg style="left:1303.5px;top:177px;" width="10" height="6" viewBox="0 0 10 6"><path d="M1.2 1.2 L5 4.8 L8.8 1.2" fill="none" stroke="#333" stroke-width="1.3"/></svg>
<svg style="left:1340px;top:105px;" width="24" height="18" viewBox="0 0 24 18"><path d="M3.3 8.2 V14.3 M12 7.75 H20.5 V14.3" fill="none" stroke="#444" stroke-width="1.3"/><path d="M3 6 H10 M6.4 2.5 V9.5" stroke="#3A9B48" stroke-width="1.4"/></svg>
<svg style="left:1340px;top:138px;" width="24" height="24" viewBox="0 0 24 24"><path d="M11.7 2 L20.5 10.8 L11.7 19.6 L2.9 10.8 Z" fill="#fff" stroke="#3A3A3A" stroke-width="1.3" stroke-linejoin="round"/><path d="M2.8 5 H10 M6.4 1.2 V8.8" stroke="#fff" stroke-width="3"/><path d="M2.8 5 H10 M6.4 1.2 V8.8" stroke="#3A9B48" stroke-width="1.4"/></svg>
<svg style="left:1340px;top:169px;" width="24" height="24" viewBox="0 0 24 24"><path d="M4 9 L11.5 5.5 L19.5 8.5 V16.5 L11.5 20.5 L4 17 Z M4 9 L11.5 12.5 L19.5 8.5 M11.5 12.5 V20.5" fill="#F0F0F0" stroke="#B5B5B5" stroke-width="1.2" stroke-linejoin="round"/><path d="M2 5 H8 M5 2 V8" stroke="#B5B5B5" stroke-width="1.3"/></svg>
<svg style="left:1421px;top:177px;" width="10" height="6" viewBox="0 0 10 6"><path d="M1.2 1.2 L5 4.8 L8.8 1.2" fill="none" stroke="#B0B0B0" stroke-width="1.2"/></svg>
<svg style="left:1486px;top:114px;" width="42" height="34" viewBox="0 0 42 34"><rect x="2.7" y="2.7" width="34.6" height="18" fill="#7FB6EA" stroke="#2C6FBA" stroke-width="1.4"/><circle cx="30.5" cy="22.2" r="9.6" fill="#fff"/><circle cx="30.5" cy="22.2" r="8.4" fill="#fff" stroke="#3A3A3A" stroke-width="1.3"/><path d="M30.5 18.6 V27" stroke="#3A3A3A" stroke-width="1.3"/><circle cx="30.5" cy="15.6" r="0.8" fill="#3A3A3A"/></svg>
<svg style="left:1556px;top:106px;" width="22" height="22" viewBox="0 0 22 22"><path d="M2.6 2.6 H19.5 V14 L14 19.5 H2.6 Z" fill="#F7F7F7" stroke="#444" stroke-width="1.4" stroke-linejoin="round"/><path d="M19.5 14 H14 V19.5" fill="none" stroke="#444" stroke-width="1.2"/></svg>
<svg style="left:1556px;top:139px;" width="22" height="22" viewBox="0 0 22 22"><rect x="1.7" y="1.7" width="18.6" height="16.8" fill="#fff" stroke="#444" stroke-width="1.4"/><rect x="2.2" y="2.2" width="17.6" height="2.4" fill="#777"/><path d="M3.8 8 H7.5 M3.8 12.8 H7.5" stroke="#666" stroke-width="1.3"/><rect x="9" y="6.6" width="8.8" height="2.8" fill="none" stroke="#666" stroke-width="1.1"/><rect x="9" y="11.4" width="3.6" height="2.8" fill="none" stroke="#666" stroke-width="1.1"/><rect x="14.2" y="11.4" width="3.6" height="2.8" fill="none" stroke="#666" stroke-width="1.1"/></svg>
<svg style="left:1556px;top:169px;" width="22" height="24" viewBox="0 0 22 24"><path d="M1.5 2 H18" stroke="#C2C2C2" stroke-width="1" stroke-dasharray="2.5 1.5"/><rect x="1.8" y="4.5" width="13.7" height="4.6" fill="#D6D6D6" stroke="#B8B8B8" stroke-width="1"/><path d="M2 6.5 V4.5 M15.5 6.5 V4.5" stroke="#B8B8B8"/><rect x="6.8" y="14.2" width="13.2" height="5" fill="#D6D6D6" stroke="#B8B8B8" stroke-width="1"/><path d="M1 16.7 H8 M4.5 13 V21" stroke="#B8B8B8" stroke-width="1.2"/></svg>
<svg style="left:1614px;top:114px;" width="42" height="34" viewBox="0 0 42 34"><rect x="2.7" y="2.7" width="34.6" height="18" fill="#7FB6EA" stroke="#2C6FBA" stroke-width="1.4"/><path d="M23.5 6.7 L23.8 30 L28.7 25.3 L31.8 31.3 L34.3 30 L31.4 24.2 L38 24 Z" fill="#fff" stroke="#fff" stroke-width="3" stroke-linejoin="round"/><path d="M23.5 6.7 L23.8 30 L28.7 25.3 L31.8 31.3 L34.3 30 L31.4 24.2 L38 24 Z" fill="#F4F4F4" stroke="#333" stroke-width="1.3" stroke-linejoin="round"/></svg>
<svg style="left:1672px;top:104px;" width="26" height="26" viewBox="0 0 26 26"><circle cx="14.8" cy="10.1" r="5.8" fill="#fff" stroke="#333" stroke-width="1.3"/><path d="M10.7 14.2 L3 22" stroke="#333" stroke-width="1.3"/></svg>
<svg style="left:1708.5px;top:113px;" width="10" height="6" viewBox="0 0 10 6"><path d="M1.2 1.2 L5 4.8 L8.8 1.2" fill="none" stroke="#333" stroke-width="1.3"/></svg>
<svg style="left:1672px;top:137px;" width="24" height="24" viewBox="0 0 24 24"><path d="M13.5 2.8 L20.8 10.1 L11.5 19.4 L4.2 12.1 Z" fill="#fff" stroke="#B146C2" stroke-width="1.3" stroke-linejoin="round"/><path d="M4.2 12.1 L8 8.3 L15.3 15.6 L11.5 19.4 Z" fill="#D68EE0" stroke="#B146C2" stroke-width="1.3" stroke-linejoin="round"/></svg>
<svg style="left:1700.5px;top:145px;" width="10" height="6" viewBox="0 0 10 6"><path d="M1.2 1.2 L5 4.8 L8.8 1.2" fill="none" stroke="#333" stroke-width="1.3"/></svg>
<svg style="left:1672px;top:170px;" width="24" height="24" viewBox="0 0 24 24"><rect x="2.8" y="2.8" width="18.2" height="17.2" fill="#fff" stroke="#444" stroke-width="1.4"/><rect x="3.3" y="3.3" width="17.2" height="2.4" fill="#888"/><path d="M12 8.5 V17 M8.2 13.4 L12 17.2 L15.8 13.4" fill="none" stroke="#2B8FD6" stroke-width="1.5"/></svg>
<svg style="left:1700.5px;top:177px;" width="10" height="6" viewBox="0 0 10 6"><path d="M1.2 1.2 L5 4.8 L8.8 1.2" fill="none" stroke="#333" stroke-width="1.3"/></svg>
<svg style="left:1882px;top:198px;" width="20" height="12" viewBox="0 0 20 12"><path d="M3.5 3.5 L9.8 9.3 L16 3.5" fill="none" stroke="#333" stroke-width="1.4"/></svg>
<svg style="left:93px;top:1054px;" width="24" height="24" viewBox="0 0 24 24"><path d="M15 3 L21.5 9.5 Q20 10.2 18.8 10.3 L15.6 13.5 Q15.2 16 15.4 17.8 L13.5 19.6 L4.9 11 L6.7 9.2 Q8.5 8.4 11 8.3 L14.2 5.1 Q14.5 4 15 3 Z" fill="none" stroke="#333" stroke-width="1.2" stroke-linejoin="round"/><path d="M8.6 15.2 L2.5 21.8" stroke="#333" stroke-width="1.2"/></svg>
<svg style="left:1514px;top:1055px;" width="22" height="22" viewBox="0 0 22 22"><rect x="1.6" y="1.6" width="18.8" height="18.3" fill="#fff" stroke="#3A3A3A" stroke-width="1.3"/><rect x="2.2" y="2.2" width="17.6" height="2.6" fill="#6A6A6A"/><path d="M1.6 5.4 H20.4 M6.6 5.4 V20 M1.6 10.3 H6.6 M1.6 15.2 H6.6" stroke="#3A3A3A" stroke-width="1.2"/><path d="M8.4 8.5 H17.5" stroke="#555" stroke-width="1"/><rect x="9" y="10.3" width="4" height="2.4" fill="none" stroke="#444" stroke-width="1"/><rect x="13.6" y="13.6" width="4" height="2.4" fill="none" stroke="#444" stroke-width="1"/></svg>
<svg style="left:1564px;top:1055px;" width="22" height="22" viewBox="0 0 22 22"><rect x="1.6" y="1.6" width="18.8" height="18.3" fill="#fff" stroke="#3A3A3A" stroke-width="1.3"/><rect x="2.2" y="2.2" width="17.6" height="2.6" fill="#6A6A6A"/><path d="M1.6 5.4 H20.4 M6.6 5.4 V20 M1.6 10.3 H6.6 M1.6 15.2 H6.6" stroke="#3A3A3A" stroke-width="1.2"/><rect x="8.2" y="12" width="12.2" height="7.9" fill="#fff" stroke="#3A3A3A" stroke-width="1.3"/></svg>
<svg style="left:1614px;top:1055px;" width="22" height="22" viewBox="0 0 22 22"><path d="M1.6 20 V1.6 H20.4 V9" fill="none" stroke="#3A3A3A" stroke-width="1.3"/><rect x="2.2" y="2.2" width="17.6" height="2.6" fill="#6A6A6A"/><path d="M1.6 5.4 H20.4 M6.6 5.4 V20 M1.6 10.3 H6.6 M1.6 15.2 H6.6" stroke="#3A3A3A" stroke-width="1.2"/><path d="M8.4 8 H12" stroke="#777" stroke-width="1.4"/><circle cx="11.8" cy="13.6" r="2.4" fill="#fff" stroke="#3A3A3A" stroke-width="1.2"/><path d="M7.3 20.5 Q7.8 16.6 11.8 16.6 Q15.8 16.6 16.3 20.5" fill="none" stroke="#3A3A3A" stroke-width="1.2"/><circle cx="17.3" cy="10.6" r="2.4" fill="#fff" stroke="#3A3A3A" stroke-width="1.2"/><path d="M17 13.3 Q20 13.5 20.8 16.5" fill="none" stroke="#3A3A3A" stroke-width="1.2"/></svg>
<svg style="left:1664px;top:1055px;" width="22" height="22" viewBox="0 0 22 22"><path d="M1.6 20 V1.6 H20.4 V9" fill="none" stroke="#3A3A3A" stroke-width="1.3"/><path d="M1.6 5.8 H20.4 M1.6 10.3 H8 M1.6 15.2 H6.6 M6.6 1.6 V20 M12.5 1.6 V8" stroke="#3A3A3A" stroke-width="1.2"/><circle cx="11.8" cy="13.6" r="2.4" fill="#fff" stroke="#3A3A3A" stroke-width="1.2"/><path d="M7.3 20.5 Q7.8 16.6 11.8 16.6 Q15.8 16.6 16.3 20.5" fill="none" stroke="#3A3A3A" stroke-width="1.2"/><circle cx="17.3" cy="10.6" r="2.4" fill="#fff" stroke="#3A3A3A" stroke-width="1.2"/><path d="M17 13.3 Q20 13.5 20.8 16.5" fill="none" stroke="#3A3A3A" stroke-width="1.2"/></svg>
<svg style="left:1712px;top:1054px;" width="24" height="24" viewBox="0 0 24 24"><rect x="4.4" y="2.4" width="15.6" height="19" fill="#fff" stroke="#3A3A3A" stroke-width="1.3"/><path d="M3 6.5 H5.8 M3 17 H5.8" stroke="#3A3A3A" stroke-width="1.3"/></svg>
<div style="left:10px;top:57px;width:1073px;height:36px;border:5px solid #FF0000"></div>
</body></html>
